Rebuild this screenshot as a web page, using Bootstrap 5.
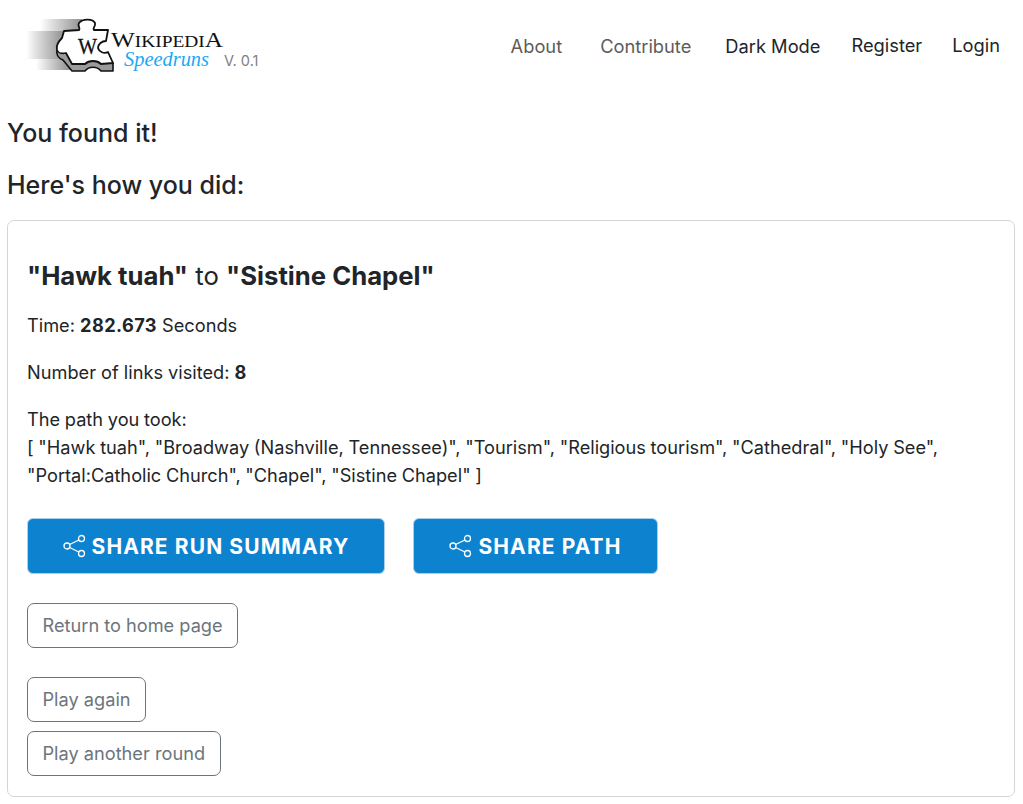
<!DOCTYPE html>
<html lang="en">
<head>
<meta charset="utf-8">
<title>Wikipedia Speedruns</title>
<link href="https://cdn.jsdelivr.net/npm/bootstrap@5.3.0/dist/css/bootstrap.min.css" rel="stylesheet">
<style>
html,body{height:804px;overflow:hidden}
body{font-family:Inter,"Liberation Sans",sans-serif;font-size:18.2px;line-height:28px;color:#212529;background:#fff}
.top-bar{height:91px;padding:0 23px 0 26px;align-items:flex-start}
.brand-wrap{display:block;width:240px;height:80px;margin-top:9px;flex:none}
.brand-wrap svg{display:block}
.top-links{display:flex;align-items:flex-start;margin-top:31px}
.top-links a{text-decoration:none;color:#212529;font-size:18.3px;line-height:28px;white-space:nowrap}
.top-links a.muted-link{color:#5c5c5c;margin-top:1px}
.top-links a.raised-link{margin-top:1px}
.gap-a{margin-right:38px}.gap-b{margin-right:34px}.gap-c{margin-right:31px}.gap-d{margin-right:30px}
.page-wrap{padding:0 8px 0 7px}
.page-head{font-size:25px;line-height:32px;font-weight:500;margin:0 0 20px}
.page-first{margin-top:26px}
.run-card{border:1px solid #d3d6d9;border-radius:7px;padding:39px 19px 19px;height:577px;margin-top:-1px}
.run-title{font-size:25.7px;line-height:32px;font-weight:400;margin:0 0 19px}
.run-title b{font-weight:700}
.run-card p{margin:0 0 19px}
.run-card p b{font-weight:700;letter-spacing:.4px}
.run-card p.path-text{word-spacing:-.4px}
.share-row{display:flex;gap:28px;margin-top:29px;margin-bottom:29px}
.share-btn{display:flex;align-items:center;justify-content:center;height:56px;background:#0d82cf;border:1px solid #a9d0ec;border-radius:6px;color:#fff;font-weight:700;font-size:21px;letter-spacing:1.1px;padding:0;gap:5px;line-height:1}
.share-btn:hover{background:#0d82cf;color:#fff}
.share-one{width:358px}.share-two{width:245px}
.ghost-btn{display:block;height:45px;padding:0 14.5px;border:1px solid #6c757d;border-radius:7px;color:#6c757d;font-size:18.2px;line-height:43px;background:#fff}
.ghost-home{margin-bottom:29px}.ghost-again{margin-bottom:9px}
</style>
</head>
<body>
<nav class="navbar navbar-expand top-bar d-flex justify-content-between">
  <a class="brand-wrap" href="#">
  <svg width="240" height="80" viewBox="26 9 240 80" xmlns="http://www.w3.org/2000/svg">
    <defs>
      <linearGradient id="fade" x1="0" x2="1" y1="0" y2="0"><stop offset="0" stop-color="#fff"/><stop offset="1" stop-color="#8f8f8f"/></linearGradient>
    </defs>
    <rect x="40" y="19" width="42" height="12" fill="url(#fade)"/>
    <rect x="26" y="31" width="38" height="28" fill="url(#fade)"/>
    <rect x="36" y="59" width="34" height="11" fill="url(#fade)"/>
    <path d="M57 50 C56 55 58 58 63 60 L72 71 L85 71 C89 66 97 66 101 71 L113 71 L113 63 L70 52 Z" fill="#9a9a9a" stroke="#111" stroke-width="1.6" stroke-linejoin="round"/>
    <path d="M64 31 L62 38 C58 42 56 46 57 50 C58 53 62 54 66 53 L72 64 L85 64 C89 60 97 60 101 64 L113 63 L108 52 C104 54 99 52 98 48 C98 44 102 41 106 41 L108 30 L94 30 C92 28 96 27 95 23 C93 19 83 18 79 23 C77 26 81 28 79 30 Z" fill="#fff" stroke="#111" stroke-width="1.8" stroke-linejoin="round"/>
    <text x="78" y="54" font-family="Liberation Serif,serif" font-size="24" fill="#111" stroke="#111" stroke-width=".3" textLength="19" lengthAdjust="spacingAndGlyphs">W</text>
    <text x="111" y="47" font-family="Liberation Serif,serif" font-size="17" fill="#111" textLength="112" lengthAdjust="spacingAndGlyphs"><tspan font-size="22">W</tspan>IKIPEDI<tspan font-size="22">A</tspan></text>
    <text x="124" y="66" font-family="Liberation Serif,serif" font-style="italic" font-size="20" fill="#1aa8f5" textLength="85" lengthAdjust="spacingAndGlyphs">Speedruns</text>
    <text x="224" y="66" font-family="Inter,sans-serif" font-size="14.5" fill="#808080">V. 0.1</text>
  </svg>
  </a>
  <div class="top-links">
    <a class="muted-link gap-a" href="#">About</a>
    <a class="muted-link gap-b" href="#">Contribute</a>
    <a class="raised-link gap-c" href="#">Dark Mode</a>
    <a class="gap-d" href="#">Register</a>
    <a href="#">Login</a>
  </div>
</nav>
<main class="page-wrap">
  <h1 class="page-head page-first">You found it!</h1>
  <h2 class="page-head">Here's how you did:</h2>
  <section class="run-card">
    <h3 class="run-title"><b>"Hawk tuah"</b> to <b>"Sistine Chapel"</b></h3>
    <p>Time: <b>282.673</b> Seconds</p>
    <p>Number of links visited: <b>8</b></p>
    <p class="path-text">The path you took:<br>[ "Hawk tuah", "Broadway (Nashville, Tennessee)", "Tourism", "Religious tourism", "Cathedral", "Holy See", "Portal:Catholic Church", "Chapel", "Sistine Chapel" ]</p>
    <div class="share-row">
      <button class="btn share-btn share-one" type="button">
        <svg width="24" height="24" viewBox="0 0 24 24" fill="none" stroke="#fff" stroke-width="1.3"><circle cx="18.5" cy="4.5" r="3"/><circle cx="18.5" cy="19.5" r="3"/><circle cx="4" cy="12" r="3"/><path d="M6.6 10.5 15.9 6M6.6 13.5 15.9 18"/></svg>
        SHARE RUN SUMMARY</button>
      <button class="btn share-btn share-two" type="button">
        <svg width="24" height="24" viewBox="0 0 24 24" fill="none" stroke="#fff" stroke-width="1.3"><circle cx="18.5" cy="4.5" r="3"/><circle cx="18.5" cy="19.5" r="3"/><circle cx="4" cy="12" r="3"/><path d="M6.6 10.5 15.9 6M6.6 13.5 15.9 18"/></svg>
        SHARE PATH</button>
    </div>
    <button class="btn ghost-btn ghost-home" type="button">Return to home page</button>
    <button class="btn ghost-btn ghost-again" type="button">Play again</button>
    <button class="btn ghost-btn" type="button">Play another round</button>
  </section>
</main>
</body>
</html>
